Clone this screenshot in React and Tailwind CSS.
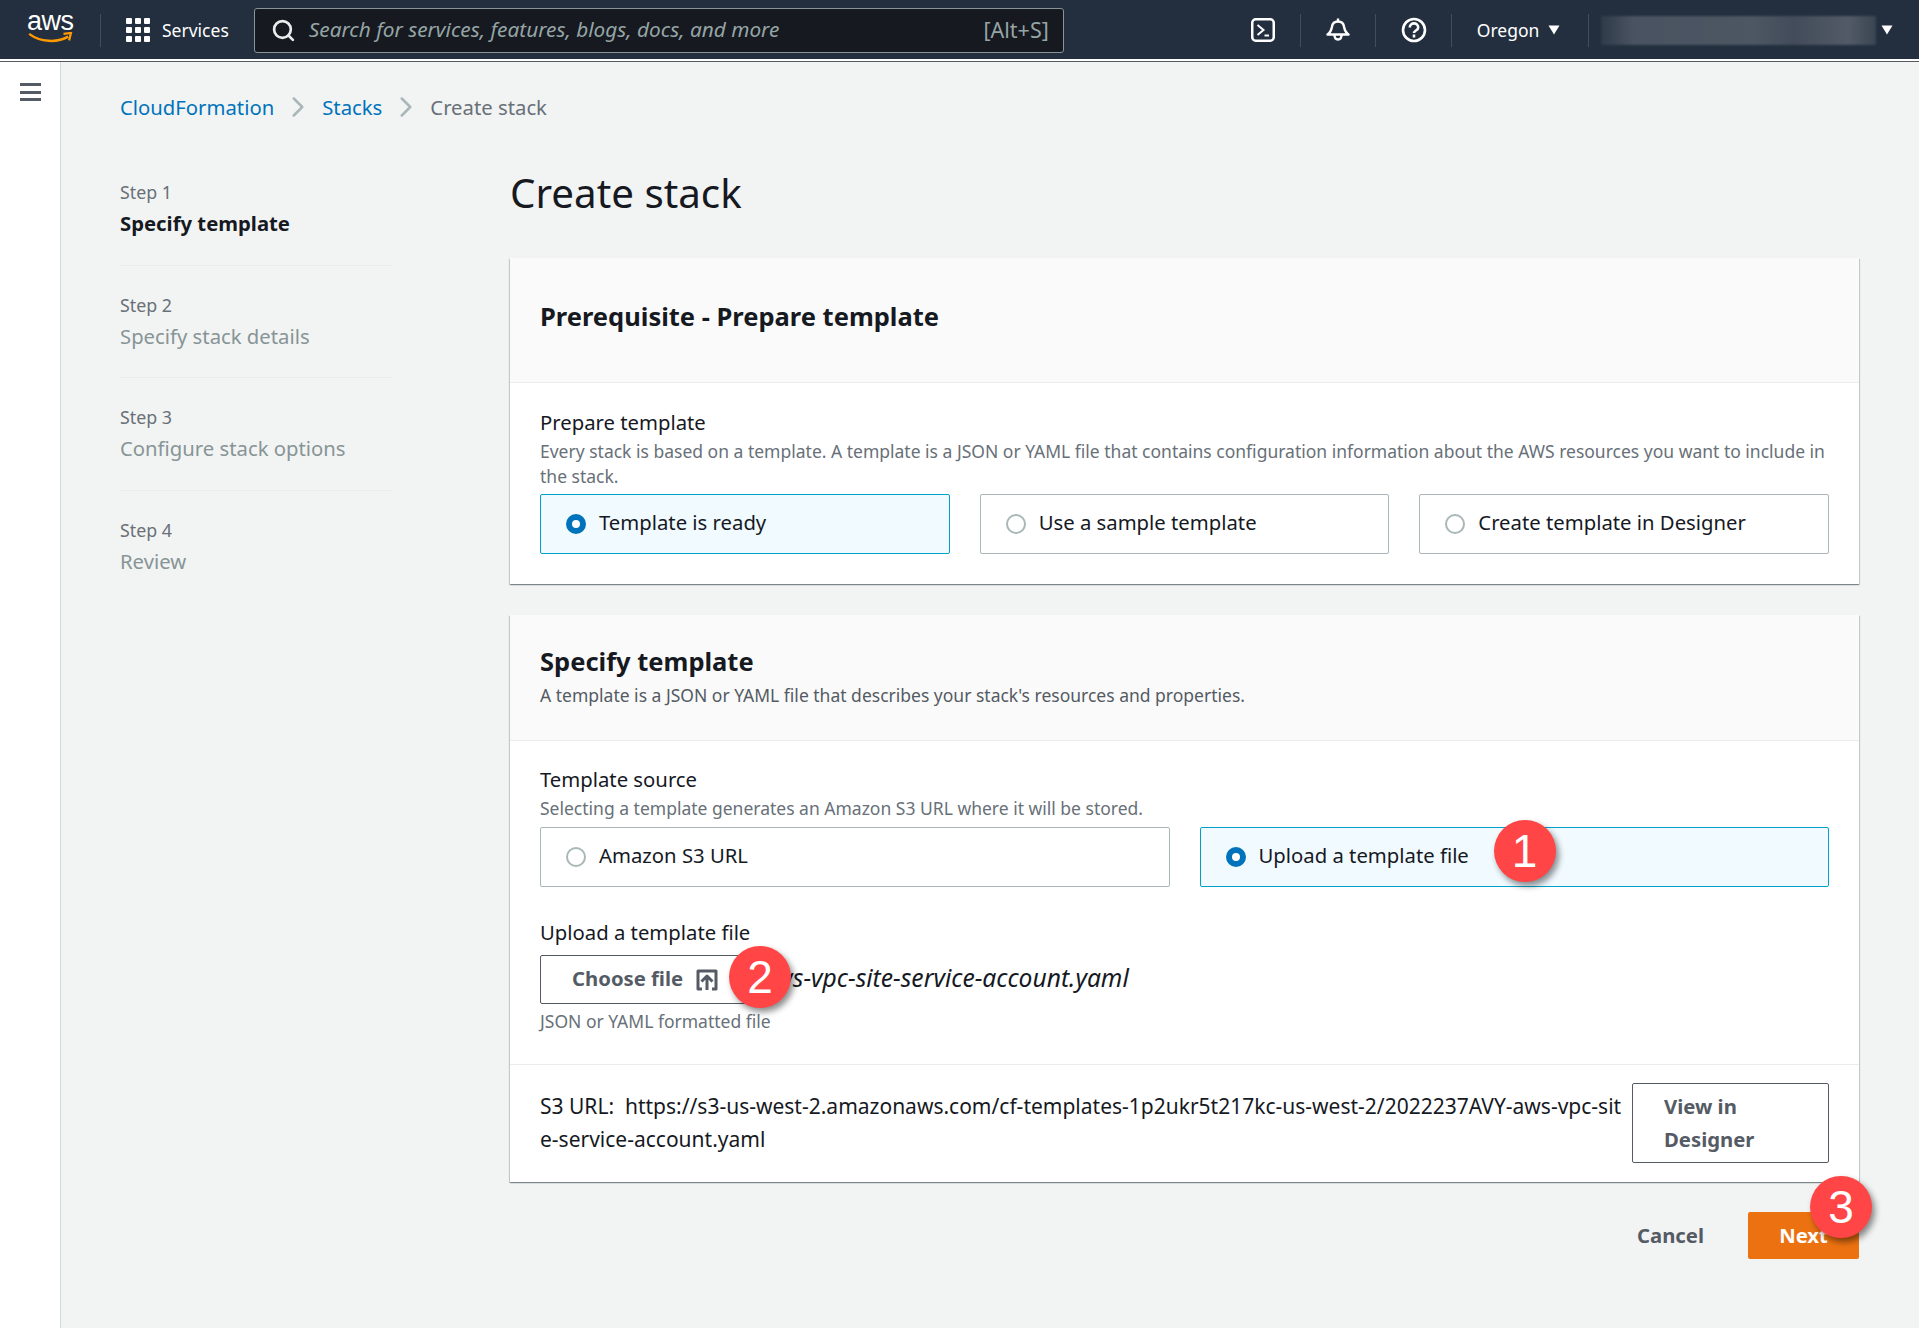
import { Search, ChevronRight } from 'lucide-react'

const font = "font-['Noto_Sans',sans-serif]"

const Caret = ({ className = '' }) => (
  <svg viewBox="0 0 12 10" className={`w-[12px] h-[10px] ${className}`}>
    <path d="M0.5 0.5h11L6 9.5z" fill="#fff" />
  </svg>
)

const Badge = ({ n, className = '' }) => (
  <div className={`absolute w-[62px] h-[62px] rounded-full bg-[#ff4545] shadow-[3px_4px_6px_rgba(0,0,0,0.45)] flex items-center justify-center text-white text-[46px] leading-none font-['Liberation_Sans',sans-serif] ${className}`}>
    {n}
  </div>
)

const Radio = ({ checked }) => (
  checked
    ? <span className="w-[20px] h-[20px] rounded-full border-[6px] border-[#0073bb] bg-white shrink-0" />
    : <span className="w-[20px] h-[20px] rounded-full border-2 border-[#aab7b8] bg-white shrink-0" />
)

const Tile = ({ label, checked, className = '', children }) => (
  <div className={`relative h-[60px] flex items-center gap-[13px] pl-[25px] rounded-[2px] border ${checked ? 'border-[#00a1c9] bg-[#f1faff]' : 'border-[#aab7b8] bg-white'} ${className}`}>
    <Radio checked={checked} />
    <span className="text-[20.3px] -mt-[4px] text-[#16191f]">{label}</span>
    {children}
  </div>
)

const Divider = () => <div className="w-px h-[33px] bg-[#414d5c]" />

const steps = [
  { step: 'Step 1', title: 'Specify template', active: true },
  { step: 'Step 2', title: 'Specify stack details' },
  { step: 'Step 3', title: 'Configure stack options' },
  { step: 'Step 4', title: 'Review' },
]

const TopBar = () => (
  <header className="h-[62px] shrink-0 bg-[#232f3e] border-b border-[#545b64] shadow-[inset_0_-2px_0_#fff]">
    <div className="h-[60px] flex items-center text-white">
      <div className="w-[100px] shrink-0 pl-[27px] flex flex-col">
        <span className="text-[27px] leading-[24px] font-['Liberation_Sans',sans-serif] tracking-[-0.5px] -mt-[6px]">aws</span>
        <svg viewBox="0 0 48 14" className="w-[47px] h-[13px] -mt-[1px]">
          <path d="M1 2c12 9 30 10 42 3" fill="none" stroke="#ff9900" strokeWidth="2.6" />
          <path d="M38 2l8-1-2 8" fill="none" stroke="#ff9900" strokeWidth="2.4" />
        </svg>
      </div>
      <Divider />
      <div className="ml-[25px] grid grid-cols-3 gap-[3px] w-[24px] shrink-0">
        {Array.from({ length: 9 }).map((_, i) => <span key={i} className="h-[6px] bg-white rounded-[1px]" />)}
      </div>
      <span className="ml-[12px] text-[17.5px]">Services</span>
      <div className="ml-[25px] w-[810px] h-[45px] flex items-center rounded-[3px] border border-[#879596] bg-[#16191f] pl-[16px] pr-[14px]">
        <Search className="w-[25px] h-[25px] text-[#eaeded]" strokeWidth={2.6} />
        <span className="ml-[13px] text-[20.8px] italic text-[#95a5a6] flex-1">Search for services, features, blogs, docs, and more</span>
        <span className="text-[21.5px] text-[#95a5a6]">[Alt+S]</span>
      </div>
      <div className="ml-[187px] w-[24px] flex justify-center">
        <svg viewBox="0 0 24 24" className="w-[24px] h-[24px]" fill="none" stroke="#fff" strokeWidth="2.5">
          <rect x="1.25" y="1.25" width="21.5" height="21.5" rx="3.5" />
          <path d="M6.5 7l6 5-6 5" strokeWidth="2" />
          <path d="M13.5 17.5H18" strokeWidth="2" />
        </svg>
      </div>
      <div className="ml-[25px]"><Divider /></div>
      <div className="ml-[25px] w-[24px] flex justify-center">
        <svg viewBox="0 0 24 24" className="w-[24px] h-[24px]" fill="none" stroke="#fff" strokeWidth="2.4" strokeLinejoin="round">
          <path d="M12 0.5v3" />
          <path d="M1.5 16.5c3-2 4-5 4.5-8C6.5 5 9 3.5 12 3.5s5.5 1.500 6 5c.5 3 1.500 6 4.500 8z" />
          <path d="M8.500 17c0 6 7 6 7 0" />
        </svg>
      </div>
      <div className="ml-[25px]"><Divider /></div>
      <div className="ml-[25px] w-[26px] flex justify-center">
        <svg viewBox="0 0 26 26" className="w-[26px] h-[26px]" fill="none" stroke="#fff" strokeWidth="2.6">
          <circle cx="13" cy="13" r="11" />
          <path d="M8.800 10.500c0-5.500 8.400-5.500 8.400 0 0 3-4.200 3-4.200 5.500" />
          <path d="M13 17.500v3" />
        </svg>
      </div>
      <div className="ml-[24px]"><Divider /></div>
      <span className="ml-[25px] text-[17.5px]">Oregon</span>
      <Caret className="ml-[9px]" />
      <div className="ml-[28px]"><Divider /></div>
      <div className="ml-[12px] w-[275px] h-[29px] bg-[linear-gradient(90deg,#2f3b4a_0%,#4a5361_12%,#4d5663_55%,#434c5a_70%,#525a67_90%,#3a4553_100%)] blur-[1px]" />
      <Caret className="ml-[5px]" />
    </div>
  </header>
)

const App = () => (
  <div className={`${font} min-h-[1328px] flex flex-col bg-[#f2f3f3]`}>
    <TopBar />
    <div className="flex flex-1">
      <aside className="w-[61px] shrink-0 bg-white border-r border-[#d5dbdb] pt-[21px] pl-[20px]">
        <div className="w-[21px] flex flex-col gap-[4.5px]">
          <span className="h-[3px] bg-[#545b64]" />
          <span className="h-[3px] bg-[#545b64]" />
          <span className="h-[3px] bg-[#545b64]" />
        </div>
      </aside>
      <main className="flex-1 pl-[59px] pr-[60px]">
        <nav className="pt-[31px] h-[59px] flex items-center gap-[15px] text-[20.3px] leading-[26px]">
          <span className="text-[#0073bb]">CloudFormation</span>
          <ChevronRight className="w-[34px] h-[34px] text-[#aab7b8] -mx-[8px]" strokeWidth={1.8} />
          <span className="text-[#0073bb]">Stacks</span>
          <ChevronRight className="w-[34px] h-[34px] text-[#aab7b8] -mx-[8px]" strokeWidth={1.8} />
          <span className="text-[#687078]">Create stack</span>
        </nav>
        <div className="flex">
          <ol className="w-[272px] shrink-0 mr-[118px] pt-[59px]">
            {steps.map((s, i) => (
              <li key={s.step} className={i < 3 ? 'border-b border-[#eaeded] pb-[26.7px] mb-[27px]' : ''}>
                <div className="text-[17.8px] leading-[24px] text-[#687078]">{s.step}</div>
                <div className={`mt-[4px] text-[20.3px] leading-[30px] ${s.active ? 'font-bold text-[#16191f]' : 'text-[#879596]'}`}>{s.title}</div>
              </li>
            ))}
          </ol>
          <div className="flex-1">
            <h1 className="pt-[50px] text-[40.3px] leading-[44px] text-[#16191f] mb-[43px]">Create stack</h1>

            <section className="bg-white shadow-[0_1px_1px_0_rgba(0,28,36,0.3),1px_1px_1px_0_rgba(0,28,36,0.15),-1px_1px_1px_0_rgba(0,28,36,0.15)]">
              <div className="h-[125px] bg-[#fafafa] border-b border-[#eaeded] pl-[30px] pt-[43px]">
                <h2 className="text-[25.5px] leading-[30px] font-bold text-[#16191f]">Prerequisite - Prepare template</h2>
              </div>
              <div className="px-[30px] pt-[26px] pb-[30px]">
                <div className="text-[20.3px] leading-[26px] text-[#16191f]">Prepare template</div>
                <p className="mt-[4px] text-[17.5px] leading-[24.5px] text-[#687078]">Every stack is based on a template. A template is a JSON or YAML file that contains configuration information about the AWS resources you want to include in the stack.</p>
                <div className="mt-[6px] grid grid-cols-3 gap-[30px]">
                  <Tile label="Template is ready" checked />
                  <Tile label="Use a sample template" />
                  <Tile label="Create template in Designer" />
                </div>
              </div>
            </section>

            <section className="mt-[31px] bg-white shadow-[0_1px_1px_0_rgba(0,28,36,0.3),1px_1px_1px_0_rgba(0,28,36,0.15),-1px_1px_1px_0_rgba(0,28,36,0.15)]">
              <div className="h-[126px] bg-[#fafafa] border-b border-[#eaeded] pl-[30px] pt-[31px]">
                <h2 className="text-[25.5px] leading-[30px] font-bold text-[#16191f]">Specify template</h2>
                <p className="mt-[7px] text-[17.5px] leading-[25px] text-[#545b64]">A template is a JSON or YAML file that describes your stack's resources and properties.</p>
              </div>
              <div className="px-[30px] pt-[25px] pb-[30px] border-b border-[#eaeded]">
                <div className="text-[20.3px] leading-[26px] text-[#16191f]">Template source</div>
                <p className="mt-[4px] text-[17.5px] leading-[25px] text-[#687078]">Selecting a template generates an Amazon S3 URL where it will be stored.</p>
                <div className="mt-[6px] grid grid-cols-2 gap-[30px]">
                  <Tile label="Amazon S3 URL" />
                  <Tile label="Upload a template file" checked>
                    <Badge n="1" className="left-[293px] -top-[8px]" />
                  </Tile>
                </div>
                <div className="mt-[32px] text-[20.3px] leading-[26px] text-[#16191f]">Upload a template file</div>
                <div className="mt-[10px] flex items-center">
                  <div className="relative">
                    <button className="w-[206px] h-[49px] flex items-center pl-[31px] pb-[2px] gap-[13px] rounded-[2px] border border-[#545b64] bg-white text-[#545b64] text-[20.3px] font-bold">
                      Choose file
                      <svg viewBox="0 0 22 22" className="w-[22px] h-[22px] mt-[2px]" fill="none" stroke="#545b64" strokeWidth="3" strokeLinejoin="round">
                        <path d="M6 20H2V2h18v18h-4" />
                        <path d="M5.500 12.500L11 7l5.500 5.500M11 7v14" />
                      </svg>
                    </button>
                    <Badge n="2" className="left-[189px] -top-[9px]" />
                  </div>
                  <span className="ml-[15px] text-[24.6px] italic text-[#16191f] -mt-[2px]">aws-vpc-site-service-account.yaml</span>
                </div>
                <p className="mt-[5px] text-[17.5px] leading-[25px] text-[#687078]">JSON or YAML formatted file</p>
              </div>
              <div className="flex items-start gap-[4px] pl-[30px] pr-[30px] pt-[18px] pb-[19px]">
                <p className="flex-1 min-w-0 pt-[7px] text-[21px] leading-[33px] text-[#16191f] break-all">S3 URL:&nbsp; https://s3-us-west-2.amazonaws.com/cf-templates-1p2ukr5t217kc-us-west-2/2022237AVY-aws-vpc-site-service-account.yaml</p>
                <button className="w-[197px] h-[80px] shrink-0 rounded-[2px] border border-[#545b64] text-left pl-[31px] pr-[40px] text-[20.3px] leading-[33px] font-bold text-[#545b64]">View in Designer</button>
              </div>
            </section>

            <div className="mt-[30px] flex justify-end items-center">
              <span className="mr-[44px] text-[20.3px] font-bold text-[#545b64]">Cancel</span>
              <div className="relative">
                <button className="w-[111px] h-[47px] rounded-[2px] bg-[#ec7211] text-white text-[20.3px] font-bold">Next</button>
                <Badge n="3" className="left-[62px] -top-[36px]" />
              </div>
            </div>
          </div>
        </div>
      </main>
    </div>
  </div>
)

export default App
